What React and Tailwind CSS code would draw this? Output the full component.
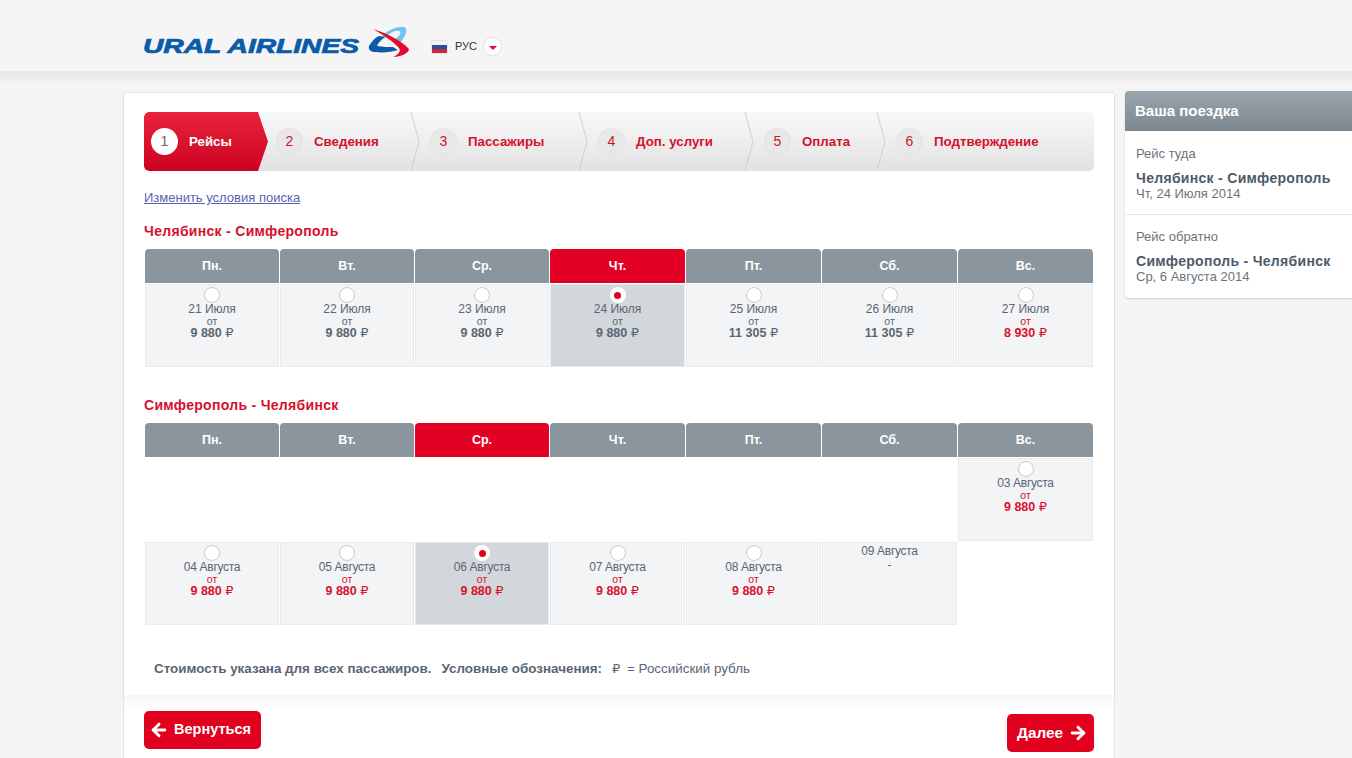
import React from 'react';
import { ArrowLeft, ArrowRight } from 'lucide-react';

const days = ['Пн.', 'Вт.', 'Ср.', 'Чт.', 'Пт.', 'Сб.', 'Вс.'];

const steps = [
  { n: 2, label: 'Сведения', box: 'w-[152px] pl-2' },
  { n: 3, label: 'Пассажиры', box: 'w-[168px] pl-2.5' },
  { n: 4, label: 'Доп. услуги', box: 'w-[166px] pl-2.5' },
  { n: 5, label: 'Оплата', box: 'w-[132px] pl-2.5' },
];

const outbound = [
  { date: '21 Июля', price: '9 880' },
  { date: '22 Июля', price: '9 880' },
  { date: '23 Июля', price: '9 880' },
  { date: '24 Июля', price: '9 880', selected: true },
  { date: '25 Июля', price: '11 305' },
  { date: '26 Июля', price: '11 305' },
  { date: '27 Июля', price: '8 930', low: true },
];

const inbound = [
  null, null, null, null, null, null,
  { date: '03 Августа', price: '9 880', low: true, tight: true },
  { date: '04 Августа', price: '9 880', low: true, tight: true },
  { date: '05 Августа', price: '9 880', low: true, tight: true },
  { date: '06 Августа', price: '9 880', low: true, selected: true, tight: true },
  { date: '07 Августа', price: '9 880', low: true, tight: true },
  { date: '08 Августа', price: '9 880', low: true, tight: true },
  { date: '09 Августа', empty: true, tight: true },
  null,
];

function Logo() {
  return (
    <div className="flex items-center">
      <span className="block w-[225px] origin-left scale-x-[1.445] font-['Liberation_Sans'] text-[19.5px] font-bold italic leading-none whitespace-nowrap text-[#0a5cab] [-webkit-text-stroke:0.7px_#0a5cab]">
        URAL AIRLINES
      </span>
      <svg width="42" height="33" viewBox="0 0 42 33" className="-mt-[9px]">
        <path d="M14 10C18 5 27 1 33 1c5-1 6 3 5 6-2 5-5 9-7 11l-3-5c4-4 6-7 3-8-5-1-10 3-14 7z" fill="#6cc5ea" />
        <path d="M1 20c3-5 7-9 10-10l6 1c-4 3-7 6-8 9 6 1 12 1 16 1l5 3c-6 2-16 3-22 2-5 0-8-2-7-6z" fill="#0a5cab" />
        <path d="M5 3c13 4 28 11 36 20 0 4-8 8-16 8 6-3 8-6 6-9C25 15 15 9 5 3z" fill="#e30b2f" />
      </svg>
    </div>
  );
}

function Chevron() {
  return (
    <svg width="10" height="59" viewBox="0 0 10 59" className="absolute right-0 top-0">
      <path d="M1 0l8 29.5L1 59" fill="none" stroke="#cfcfcf" strokeWidth="1" />
    </svg>
  );
}

function Step({ n, label, box, chevron = true }) {
  return (
    <div className={`relative flex h-full items-center ${box}`}>
      <span className="flex h-[27px] w-[27px] items-center justify-center rounded-full border border-[#e2e2e2] bg-[#e8e8e8] text-[14px] text-[#d5112e]">
        {n}
      </span>
      <span className="ml-[11px] text-[13.3px] font-bold text-[#d5112e]">{label}</span>
      {chevron && <Chevron />}
    </div>
  );
}

function Radio({ selected }) {
  if (selected) {
    return (
      <span className="flex h-4 w-4 items-center justify-center rounded-full bg-white">
        <span className="h-[7px] w-[7px] rounded-full bg-[#e2001f]" />
      </span>
    );
  }
  return <span className="h-4 w-4 rounded-full border border-[#c9c9c9] bg-white" />;
}

function Cell({ cell }) {
  if (!cell) return <div className="h-[83px]" />;
  const bg = cell.selected ? 'bg-[#d2d7db] border border-[#e8e8e8]' : 'bg-[#f3f4f6] border border-[#ebebeb]';
  const dateCls = cell.tight ? 'tracking-[-0.3px]' : '';
  if (cell.empty) {
    return (
      <div className={`flex h-[83px] flex-col items-center pt-px text-[12px] leading-[14px] text-[#5a6673] ${bg}`}>
        <span className={dateCls}>{cell.date}</span>
        <span>-</span>
      </div>
    );
  }
  const tone = cell.low ? 'text-[#d9112e]' : 'text-[#5a6673]';
  return (
    <div className={`flex h-[83px] flex-col items-center pt-[2px] text-[#5a6673] ${bg}`}>
      <Radio selected={cell.selected} />
      <span className={`-mt-px text-[12px] leading-[14px] ${dateCls}`}>{cell.date}</span>
      <span className={`text-[10.5px] leading-[11px] ${tone}`}>от</span>
      <span className={`-mt-px text-[12.5px] font-bold leading-[14px] ${tone}`}>
        {cell.price} <span className="font-['DejaVu_Sans'] text-[13px] font-normal">₽</span>
      </span>
    </div>
  );
}

function DayTable({ active, cells }) {
  return (
    <div className="ml-px grid w-[948px] grid-cols-[134px_134px_134px_135px_135px_135px_135px] gap-x-px gap-y-px">
      {days.map((d, i) => (
        <div
          key={d}
          className={`flex h-[34px] items-center justify-center rounded-t-[4px] text-[12.5px] font-bold text-white ${i === active ? 'bg-[#e40025]' : 'bg-[#8a959e]'}`}
        >
          {d}
        </div>
      ))}
      {cells.map((c, i) => (
        <Cell key={i} cell={c} />
      ))}
    </div>
  );
}

function TripLeg({ title, route, date, box }) {
  return (
    <div className={`pl-[11px] ${box}`}>
      <div className="text-[13px] leading-[14px] text-[#6b747d]">{title}</div>
      <div className="mt-[9px] text-[14px] font-bold leading-[16px] tracking-[0.3px] text-[#4d5b6a]">{route}</div>
      <div className="text-[13px] leading-[16px] text-[#6b747d]">{date}</div>
    </div>
  );
}

export default function App() {
  return (
    <div className="flex h-screen flex-col overflow-hidden bg-[#f5f5f5] font-['Liberation_Sans',Arial,sans-serif]">
      <header className="flex h-[71px] shrink-0 items-center pl-[143px] pt-[22px]">
        <Logo />
        <div className="ml-[22px] flex items-center">
          <div className="flex h-3 w-[15px] flex-col shadow-[0_0_1px_#999]">
            <span className="flex-1 bg-[#f2f2f2]" />
            <span className="flex-1 bg-[#2f4c9c]" />
            <span className="flex-1 bg-[#c8283c]" />
          </div>
          <span className="ml-2 text-[11px] text-[#333]">РУС</span>
          <span className="ml-[6px] flex h-[19px] w-[19px] items-center justify-center rounded-full border border-[#e0e0e0] bg-white">
            <span className="mt-[2px] h-0 w-0 border-x-[4px] border-t-[4px] border-x-transparent border-t-[#d5112e]" />
          </span>
        </div>
      </header>
      <div className="h-[14px] shrink-0 bg-gradient-to-b from-[#e6e6e6] to-[#f5f5f5]" />

      <div className="mt-[7px] flex min-h-0 flex-1 gap-[10px] pl-[123px]">
        <main className="w-[992px] rounded-t-[4px] border border-b-0 border-[#e6e6e6] bg-white">
          <div className="h-[602px] px-5 pt-[19px] shadow-[0_2px_6px_rgba(0,0,0,0.06)]">
            <div className="flex h-[59px] w-[950px] overflow-hidden rounded-[5px] bg-gradient-to-b from-[#f9f9f9] to-[#e2e2e2]">
              <div className="flex h-full w-[124px] items-center rounded-l-[5px] bg-gradient-to-b from-[#e8213c] to-[#cc0020] pl-[7px] [clip-path:polygon(0_0,114px_0,124px_50%,114px_100%,0_100%)]">
                <span className="flex h-[27px] w-[27px] items-center justify-center rounded-full bg-white text-[14px] text-[#666]">1</span>
                <span className="ml-[11px] text-[13.3px] font-bold text-white">Рейсы</span>
              </div>
              {steps.map((s) => (
                <Step key={s.n} {...s} />
              ))}
              <Step n={6} label="Подтверждение" box="flex-1 pl-2.5" chevron={false} />
            </div>

            <a className="mt-5 block text-[13px] leading-[14px] text-[#5a62b0] underline">Изменить условия поиска</a>

            <h2 className="mt-[19px] text-[14px] font-bold leading-[15px] tracking-[0.3px] text-[#d5112e]">Челябинск - Симферополь</h2>
            <div className="mt-[10px]">
              <DayTable active={3} cells={outbound} />
            </div>

            <h2 className="mt-[31px] text-[14px] font-bold leading-[15px] tracking-[0.3px] text-[#d5112e]">Симферополь - Челябинск</h2>
            <div className="mt-[10px]">
              <DayTable active={2} cells={inbound} />
            </div>

            <p className="mt-9 pl-[10px] text-[13.4px] leading-[16px] text-[#5a6673]">
              <b>Стоимость указана для всех пассажиров.</b>
              <b className="ml-[10px]">Условные обозначения:</b>
              <span className="ml-[10px]">
                <span className="mr-[3px] font-['DejaVu_Sans'] text-[13px]">₽</span> = Российский рубль
              </span>
            </p>
          </div>

          <div className="flex items-start justify-between bg-gradient-to-b from-[#f7f7f7] to-white to-[14px] px-5 pt-4">
            <button className="flex h-[38px] w-[117px] items-center gap-[5px] rounded-[5px] bg-[#e2001f] pl-[5px] text-[14.5px] font-bold text-white">
              <ArrowLeft size={20} strokeWidth={3.5} />
              Вернуться
            </button>
            <button className="mt-[3px] flex h-[38px] w-[87px] items-center gap-[5px] rounded-[5px] bg-[#e2001f] pl-[10px] text-[15.3px] font-bold text-white">
              Далее
              <ArrowRight size={20} strokeWidth={3.5} />
            </button>
          </div>
        </main>

        <aside className="-mt-px flex-1">
          <div className="overflow-hidden rounded-l-[4px] bg-white shadow-[0_1px_2px_rgba(0,0,0,0.15)]">
            <div className="flex h-[40px] items-center bg-gradient-to-b from-[#9aa4ab] to-[#7c8790] pl-[10px] text-[15px] font-bold text-white">
              Ваша поездка
            </div>
            <TripLeg title="Рейс туда" route="Челябинск - Симферополь" date="Чт, 24 Июля 2014" box="h-[84px] pt-4 border-b border-[#e6e6e6]" />
            <TripLeg title="Рейс обратно" route="Симферополь - Челябинск" date="Ср, 6 Августа 2014" box="h-[83px] pt-[15px]" />
          </div>
        </aside>
      </div>
    </div>
  );
}
